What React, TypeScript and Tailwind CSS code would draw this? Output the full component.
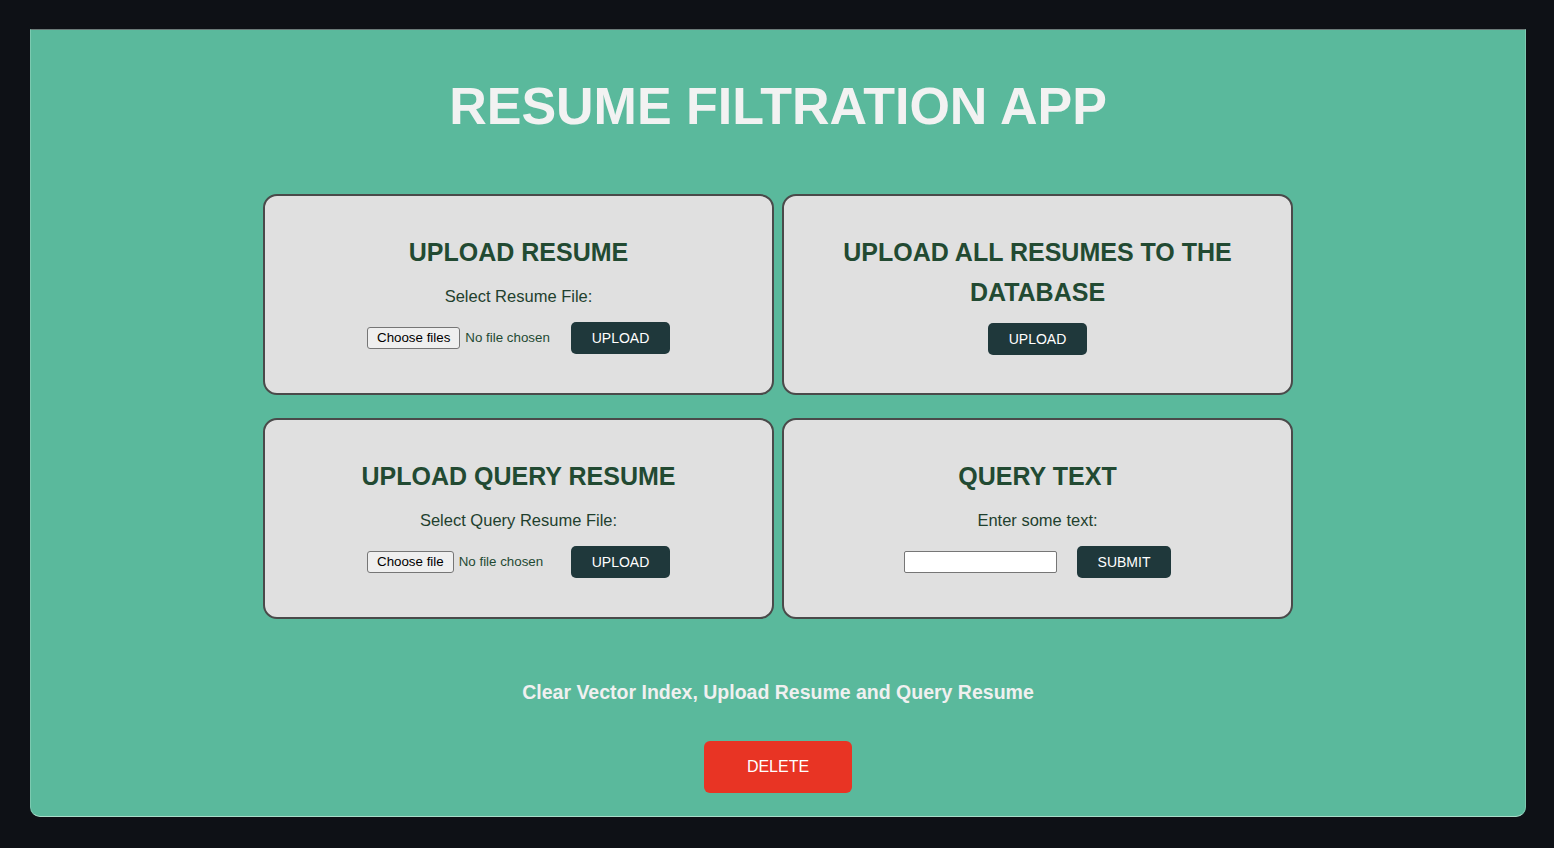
import React from "react";

const font = { fontFamily: '"Liberation Sans", Arial, sans-serif' };

function FileInput({ label }: { label: string }) {
  return (
    <div className="flex w-[184px] items-center overflow-hidden whitespace-nowrap">
      <span className="flex h-[22px] items-center rounded-[3px] border border-[#767676] bg-[#efefef] px-[9px] text-[13.33px] text-black">
        {label}
      </span>
      <span className="ml-[5px] text-[13.33px] text-[#1f4a33]">No file chosen</span>
    </div>
  );
}

function DarkButton({ children, w }: { children: React.ReactNode; w: string }) {
  return (
    <button className={`flex h-[32px] items-center justify-center rounded-[5px] bg-[#1f383b] text-[14px] text-white ${w}`}>
      {children}
    </button>
  );
}

function Card({ children }: { children: React.ReactNode }) {
  return (
    <div className="flex h-[201px] flex-col items-center rounded-[14px] border-2 border-[#4a4a4a] bg-[#e0e0e0] px-[40px] pt-[36px]">
      {children}
    </div>
  );
}

function Heading({ children }: { children: React.ReactNode }) {
  return (
    <h2 className="text-center text-[25px] font-bold leading-[40px] text-[#224a32]">{children}</h2>
  );
}

function Label({ children }: { children: React.ReactNode }) {
  return <p className="mt-[15px] text-[16.5px] leading-[18px] text-[#1f3f2e]">{children}</p>;
}

export default function App() {
  return (
    <div className="min-h-screen w-full bg-[#0e1116] pt-[29px]" style={font}>
      <div className="ml-[30px] flex h-[788px] w-[1496px] flex-col items-center rounded-b-[10px] border-t border-t-[#6b7a78] border-x border-b border-x-[#7cc9b0] border-b-[#a9dcc9] bg-[#5ab99c]">
        <h1 className="mt-[46px] text-[52px] font-bold leading-[60px] text-[#f2f2f2]">RESUME FILTRATION APP</h1>

        <div className="mt-[58px] grid w-[1030px] grid-cols-2 gap-x-[8px] gap-y-[23px]">
          <Card>
            <Heading>UPLOAD RESUME</Heading>
            <Label>Select Resume File:</Label>
            <div className="mt-[17px] flex items-center gap-[20px]">
              <FileInput label="Choose files" />
              <DarkButton w="w-[99px]">UPLOAD</DarkButton>
            </div>
          </Card>
          <Card>
            <Heading>
              UPLOAD ALL RESUMES TO THE
              <br />
              DATABASE
            </Heading>
            <div className="mt-[11px]">
              <DarkButton w="w-[99px]">UPLOAD</DarkButton>
            </div>
          </Card>
          <Card>
            <Heading>UPLOAD QUERY RESUME</Heading>
            <Label>Select Query Resume File:</Label>
            <div className="mt-[17px] flex items-center gap-[20px]">
              <FileInput label="Choose file" />
              <DarkButton w="w-[99px]">UPLOAD</DarkButton>
            </div>
          </Card>
          <Card>
            <Heading>QUERY TEXT</Heading>
            <Label>Enter some text:</Label>
            <div className="mt-[17px] flex items-center gap-[20px]">
              <input
                type="text"
                className="h-[22px] w-[153px] rounded-[2px] border border-[#767676] bg-white px-1 text-[13px] outline-none"
              />
              <DarkButton w="w-[94px]">SUBMIT</DarkButton>
            </div>
          </Card>
        </div>

        <p className="mt-[62px] text-[19.5px] font-bold leading-[22px] text-[#f0f0f0]">
          Clear Vector Index, Upload Resume and Query Resume
        </p>

        <button className="mt-[38px] flex h-[52px] w-[148px] items-center justify-center rounded-[6px] bg-[#e83424] text-[16px] text-white">
          DELETE
        </button>
      </div>
    </div>
  );
}
